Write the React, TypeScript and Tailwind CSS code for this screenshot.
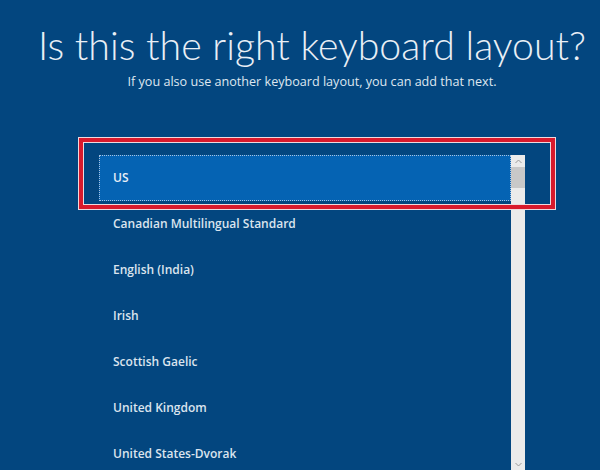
import React from "react";

const items = [
  "US",
  "Canadian Multilingual Standard",
  "English (India)",
  "Irish",
  "Scottish Gaelic",
  "United Kingdom",
  "United States-Dvorak",
];

export default function App() {
  return (
    <div
      className="relative w-[600px] h-[470px] overflow-hidden bg-[#03467f] text-[#e6edf5]"
      style={{ fontFamily: '"Open Sans", "Noto Sans", sans-serif' }}
    >
      <div className="flex flex-col items-center pl-[24px]">
        <h1
          className="mt-[21px] text-[39.3px] leading-[48px] font-light text-[#e9eff6] whitespace-nowrap"
          style={{ fontFamily: 'Lato, "Open Sans", sans-serif' }}
        >
          Is this the right keyboard layout?
        </h1>
        <p className="mt-[5px] text-[12.6px] leading-[16px] text-[#dfe7f0] whitespace-nowrap">
          If you also use another keyboard layout, you can add that next.
        </p>
        <div className="mt-[65px] flex w-[426px] h-[330px]">
          <ul className="flex-1 flex flex-col">
            {items.map((it, i) => (
              <li
                key={it}
                className={
                  i === 0
                    ? "h-[46px] shrink-0 flex items-center pl-[13px] bg-[#0563b3] border border-dotted border-[#a9c3e0] text-[12px] font-semibold text-[#e8eff7]"
                    : "h-[46px] shrink-0 flex items-center pl-[14px] text-[12px] font-semibold text-[#dbe4ee]"
                }
              >
                {it}
              </li>
            ))}
          </ul>
          <div className="w-[14px] flex flex-col bg-[#ebebeb] h-[315px]">
            <div className="h-[12px] flex items-center justify-center">
              <svg width="7" height="5" viewBox="0 0 7 5">
                <path d="M0.5 4 L3.5 1 L6.5 4" fill="none" stroke="#9a9a9a" strokeWidth="1" />
              </svg>
            </div>
            <div className="h-[21px] bg-[#c8c8c8]" />
            <div className="flex-1" />
            <div className="h-[12px] flex items-center justify-center">
              <svg width="7" height="5" viewBox="0 0 7 5">
                <path d="M0.5 1 L3.5 4 L6.5 1" fill="none" stroke="#9a9a9a" strokeWidth="1" />
              </svg>
            </div>
          </div>
        </div>
      </div>
      <div className="absolute left-[78px] top-[137px] w-[478px] h-[73px] border border-[#efd9dd]">
        <div className="w-full h-full border-[4px] border-[#d91a2c]">
          <div className="w-full h-full border border-[#efd9dd]" />
        </div>
      </div>
    </div>
  );
}
